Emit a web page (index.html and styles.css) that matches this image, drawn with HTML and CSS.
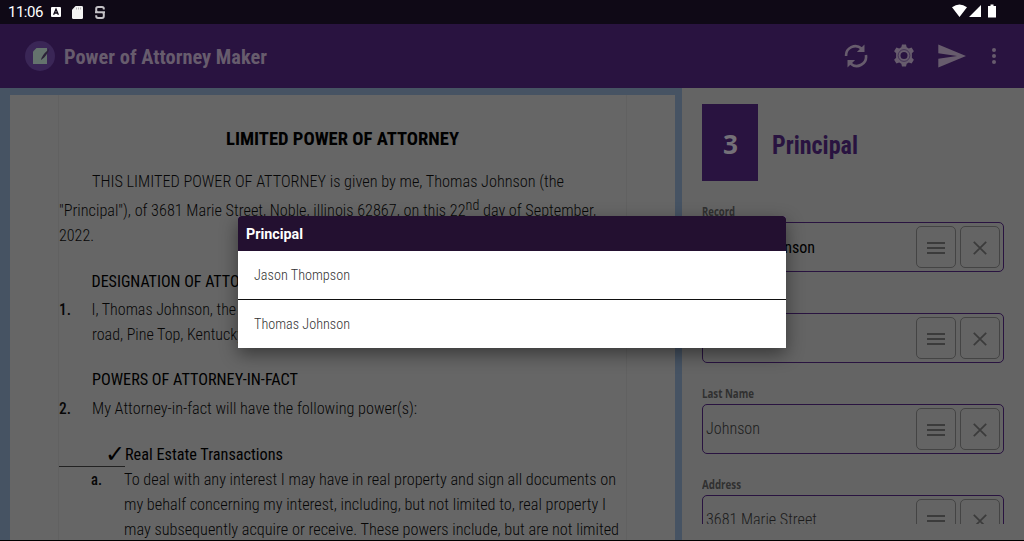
FILE: index.html
```html
<!DOCTYPE html>
<html lang="en"><head><meta charset="utf-8"><title>Power of Attorney Maker</title><link rel="stylesheet" href="styles.css"></head>
<body>
<svg class="defs" width="0" height="0"><defs>
<symbol id="menu" viewBox="0 0 20 14"><path d="M1 2h18M1 7h18M1 12h18" fill="none" stroke="currentColor" stroke-width="1.8"/></symbol>
<symbol id="close" viewBox="0 0 14 14"><path d="M.8.8l12.4 12.4M13.2.8L.8 13.2" fill="none" stroke="currentColor" stroke-width="1.7"/></symbol>
</defs></svg>
<div class="app">
<div class="status"><span class="clock">11:06</span>
<svg class="s1" width="10" height="10" viewBox="0 0 10 10"><rect width="10" height="10" rx="1" fill="#fff"/><path d="M2.6 7.8L5 2.2l2.4 5.6M3.4 6h3.2" fill="none" stroke="#0f0916" stroke-width="1.3"/></svg>
<svg class="s2" width="11" height="13" viewBox="0 0 11 13"><path d="M3.6 0H9.600Q11 0 11 1.300V11.700Q11 13 9.600 13H1.400Q0 13 0 11.700V3.800z" fill="#f4f4f4"/><path d="M4.500 1.500v2M6.500 1.500v2M8.500 1.500v2" stroke="#aaa" stroke-width=".8"/></svg>
<svg class="s3" width="10" height="13" viewBox="0 0 10 13"><path d="M8.800 3.600V2.800Q8.800 1 7 1H3Q1.200 1 1.200 2.800V4.200Q1.200 6.300 3 6.300H7Q8.800 6.300 8.800 8.300V10Q8.800 12 7 12H3Q1.200 12 1.200 10V9.300M0 6.300h10" fill="none" stroke="#c4c2c6" stroke-width="2"/></svg>
<svg class="s4" width="46" height="14" viewBox="0 0 46 14"><path d="M0 3.200Q7.500-2.200 15 3.200L7.500 13zM17 13L29 1v12zM38.500.5h3V2H44v11.500h-8V2h2.500z" fill="#fff"/></svg></div>
<header class="bar">
<svg class="logo" width="30" height="30" viewBox="0 0 30 30"><circle cx="15" cy="15" r="15" fill="#3a2656"/><path d="M11.500 7H22v16H8V10.500z" fill="#64736d"/><path d="M23 9q.8-1.500 1.200-1.500 0 3-5 9l-3.200 2.500q1-5 7-10z" fill="#2b2338"/></svg>
<h1 class="fit" data-w="203">Power of Attorney Maker</h1>
<svg class="i1" width="24" height="26" viewBox="0 0 24 26"><g fill="none" stroke="currentColor" stroke-width="2.600"><path d="M2.100 13A9.300 9.300 0 0 1 17.500 5.500"/><path d="M21.900 12a9.300 9.300 0 0 1-15.400 8.500"/></g><path d="M20.500 1.500V9h-7.600zM3.500 24.500V17h7.600z" fill="currentColor"/></svg>
<svg class="i2" width="24" height="24" viewBox="0 0 24 24"><path d="M9.300 3.200L10 .4h4l.7 2.800 2.100 1.200 2.800-.8 2.300 3.700-2 2v4.400l2 2-2.300 3.700-2.800-.8-2.100 1.200-.7 2.800h-4l-.7-2.800-2.100-1.200-2.800.8-2.300-3.700 2-2V9.300l-2-2 2.300-3.700 2.800.8z" fill="currentColor"/><circle cx="12" cy="11.500" r="5.900" fill="none" stroke="#3b2850" stroke-width=".8"/><circle cx="12" cy="11.500" r="3.500" fill="#291340"/></svg>
<svg class="i3" width="28" height="24" viewBox="0 0 28 24"><path d="M.3.5L28 12 .3 23.500v-8.700L19 12 .3 9.200z" fill="currentColor"/></svg>
<svg class="i4" width="4" height="16" viewBox="0 0 4 16"><circle cx="2" cy="2" r="2"/><circle cx="2" cy="8" r="2"/><circle cx="2" cy="14" r="2"/></svg>
</header>
<main>
<section class="preview"><div class="paper"><div class="doc">
<h2><span class="fit" data-w="233">LIMITED POWER OF ATTORNEY</span></h2>
<p class="line in1 first"><span class="fit" data-w="472">THIS LIMITED POWER OF ATTORNEY is given by me, Thomas Johnson (the</span></p>
<p class="line tall"><span class="fit" data-w="537">"Principal"), of 3681 Marie Street, Noble, illinois 62867, on this 22<sup>nd</sup> day of September,</span></p>
<p class="line"><span class="fit" data-w="35">2022.</span></p>
<h3 class="line in1 gap">DESIGNATION OF ATTORNEY</h3>
<div class="item one"><b class="fit" data-w="12">1.</b><div><p class="line">I, Thomas Johnson, the Principal, appoint Jason Thompson, of 1245 Oak</p><p class="line"><span class="fit" data-w="152">road, Pine Top, Kentucky</span></p></div></div>
<h3 class="line in1 gap2"><span class="fit" data-w="206">POWERS OF ATTORNEY-IN-FACT</span></h3>
<div class="item two"><b class="fit" data-w="12">2.</b><p class="line"><span class="fit" data-w="325">My Attorney-in-fact will have the following power(s):</span></p></div>
<h3 class="line check"><span class="initial">✓</span><span class="fit" data-w="158">Real Estate Transactions</span></h3>
<div class="item sub"><b class="fit" data-w="11">a.</b><div><p class="line"><span class="fit" data-w="492">To deal with any interest I may have in real property and sign all documents on</span></p><p class="line"><span class="fit" data-w="482">my behalf concerning my interest, including, but not limited to, real property I</span></p><p class="line"><span class="fit" data-w="495">may subsequently acquire or receive. These powers include, but are not limited</span></p></div></div>
</div></div></section>
<section class="form">
<div class="step"><div class="num"><span class="fit" data-w="15">3</span></div><h2 class="fit" data-w="86">Principal</h2></div>
<div class="field"><label><span class="fit" data-w="33">Record</span></label><div class="box"><span class="val dark"><span class="fit" data-w="109">Thomas Johnson</span></span><button><svg width="20" height="14"><use href="#menu"/></svg></button><button><svg width="14" height="14"><use href="#close"/></svg></button></div></div>
<div class="field"><label><span class="fit" data-w="53">First Name</span></label><div class="box"><span class="val"><span class="fit" data-w="55">Thomas</span></span><button><svg width="20" height="14"><use href="#menu"/></svg></button><button><svg width="14" height="14"><use href="#close"/></svg></button></div></div>
<div class="field"><label><span class="fit" data-w="52">Last Name</span></label><div class="box"><span class="val"><span class="fit" data-w="54">Johnson</span></span><button><svg width="20" height="14"><use href="#menu"/></svg></button><button><svg width="14" height="14"><use href="#close"/></svg></button></div></div>
<div class="field"><label><span class="fit" data-w="39">Address</span></label><div class="box"><span class="val"><span class="fit" data-w="111">3681 Marie Street</span></span><button><svg width="20" height="14"><use href="#menu"/></svg></button><button><svg width="14" height="14"><use href="#close"/></svg></button></div></div>
</section>
</main>
</div>
<div class="dialog"><h2><span class="fit" data-w="57">Principal</span></h2><div class="opt"><span class="fit" data-w="96">Jason Thompson</span></div><div class="opt"><span class="fit" data-w="96">Thomas Johnson</span></div></div>
<script src="fit.js"></script>
</body></html>
```

FILE: styles.css
```css
*{box-sizing:border-box;margin:0;padding:0}
body{width:1024px;height:541px;overflow:hidden;background:#000;font-family:"Roboto Condensed",Roboto,sans-serif;font-stretch:75%;font-weight:300;font-size:16px;color:#060606}
.defs{display:block;position:absolute}
.fit{display:inline-block;white-space:nowrap;transform-origin:0 50%}
.app{display:grid;grid-template-rows:24px 64px 452px;height:540px}
.status{background:#0f0916;display:flex;align-items:center;padding-left:8px;color:#fff}
.clock{font:400 15px/24px Roboto,sans-serif;width:43px;white-space:nowrap;letter-spacing:-.5px}
.s2{margin-left:11px}.s3{margin-left:12px}.s4{margin-left:auto;margin-right:26px;position:relative;top:-1px}
.bar{background:#291340;display:flex;align-items:center;padding-left:25px;color:#675c6d}
.bar h1{font-size:20px;font-weight:700;margin-left:9px;color:#675c6d;line-height:24px;position:relative;top:1px}
.i1{margin-left:auto}.i2{margin-left:24px}.i3{margin-left:22px}.i4{margin:0 28px 0 26px;fill:currentColor}
main{display:grid;grid-template-columns:682px 1fr;height:452px;overflow:hidden}
.preview{background:#465363;padding:7px 7px 0 10px;overflow:hidden}
.paper{background:#666;height:445px;padding:0 48px}
.doc{height:445px;border-left:1px solid #616161;border-right:1px solid #616161;padding-top:31px}
.doc .line{height:25px;line-height:25px;font-size:16px;white-space:nowrap}
.doc h2{text-align:center;font-size:18px;font-weight:700;line-height:25px;height:25px;color:#000}
.doc h3{font-weight:400;color:#000}
.doc .in1{padding-left:32.5px}
.doc .first{margin-top:18px}
.doc .tall{height:29px;line-height:33px}
.doc sup{font-size:14px;line-height:0;vertical-align:6px}
.gap{margin-top:21px}.gap2{margin-top:20px}
.item{display:grid;grid-template-columns:32.5px 1fr;line-height:25px}
.item b{font-weight:500;justify-self:start}
.one{margin-top:3px}.two{margin-top:4px}
.check{margin-top:21px;display:flex}
.initial{width:66px;height:25px;border-bottom:1px solid #222;text-align:right;font:24px/25px "DejaVu Sans",sans-serif}
.sub{padding-left:32px}
.form{background:#646464;padding:16px 20px 0;height:436px;overflow:hidden;box-shadow:0 16px #646464}
.step{display:flex;align-items:center;height:77px;margin-bottom:21px}
.num{width:56px;height:77px;background:#291340;color:#747078;font:700 26px/81px "Noto Sans",sans-serif;text-align:center}
.step h2{font-size:25px;font-weight:700;color:#291340;margin-left:14px;line-height:32px;position:relative;top:3px}
.field{height:91px}
.field label{display:block;height:20px;font:700 12px/20px "Open Sans",sans-serif;color:#303030}
.box{height:50px;width:302px;border:1px solid #291340;border-radius:5px;display:flex;align-items:center;padding:0 3px;gap:4px}
.val{flex:1;white-space:nowrap;color:#1c1c1c;position:relative;top:-1px}
.val.dark{font-weight:400;color:#000;top:0}
.box button{width:40px;height:42px;border:1px solid #444;border-radius:5px;background:none;color:#3b3b3b;display:flex;align-items:center;justify-content:center;padding-top:1px}
.dialog{position:absolute;left:238px;top:216px;width:548px;height:132px;background:#fff;border-radius:3px 3px 0 0;overflow:hidden;box-shadow:0 6px 18px rgba(0,0,0,.45)}
.dialog h2{height:35px;background:#231030;color:#fff;font:700 14px/36px Roboto,sans-serif;font-stretch:100%;padding-left:8px}
.opt{height:48px;line-height:48px;padding-left:16px;font-size:14px;color:#333}
.opt+.opt{border-top:1px solid #111;height:49px}
```

FILE: fit.js
```js
// Condense each text run to its measured column width.
document.querySelectorAll('.fit').forEach(function (el) {
  var natural = el.getBoundingClientRect().width, target = +el.dataset.w;
  el.style.transform = 'scaleX(' + target / natural + ')';
  el.style.marginRight = (target - natural) + 'px';
});
```
